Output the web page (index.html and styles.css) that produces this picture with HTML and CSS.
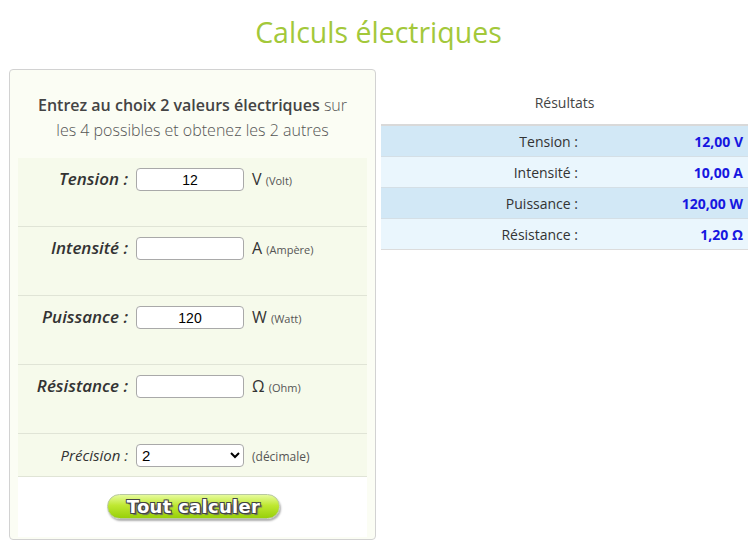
FILE: index.html
```html
<!DOCTYPE html>
<html lang="fr">

<head>
    <meta charset="UTF-8">
    <meta name="viewport" content="width=device-width, initial-scale=1.0">
    <title>Calculs électriques</title>
    <link rel="stylesheet" href="styles.css">
</head>

<body>
    <h1 class='titre'>Calculs électriques</h1>
    <div class='page'>
        <form class='saisie'>
            <p class='intro'><b>Entrez au choix 2 valeurs électriques</b> sur les 4 possibles et obtenez les 2 autres</p>
            <div class='ligne'>
                <label>Tension :</label>
                <input type='text' value='12'>
                <span class='unite'>V <small>(Volt)</small></span>
            </div>
            <div class='ligne'>
                <label>Intensité :</label>
                <input type='text' value=''>
                <span class='unite'>A <small>(Ampère)</small></span>
            </div>
            <div class='ligne'>
                <label>Puissance :</label>
                <input type='text' value='120'>
                <span class='unite'>W <small>(Watt)</small></span>
            </div>
            <div class='ligne'>
                <label>Résistance :</label>
                <input type='text' value=''>
                <span class='unite'>Ω <small>(Ohm)</small></span>
            </div>
            <div class='ligne precision'>
                <label>Précision :</label>
                <select>
                    <option>0</option>
                    <option>1</option>
                    <option selected>2</option>
                    <option>3</option>
                </select>
                <span class='unite'><small>(décimale)</small></span>
            </div>
            <div class='bas'>
                <button type='button' class='bouton'>Tout calculer</button>
            </div>
        </form>
        <div class='resultats'>
            <h2>Résultats</h2>
            <table>
                <tr><td class='nom'>Tension :</td><td class='val'>12,00 V</td></tr>
                <tr><td class='nom'>Intensité :</td><td class='val'>10,00 A</td></tr>
                <tr><td class='nom'>Puissance :</td><td class='val'>120,00 W</td></tr>
                <tr><td class='nom'>Résistance :</td><td class='val'>1,20 Ω</td></tr>
            </table>
        </div>
    </div>
</body>

</html>
```

FILE: styles.css
```css
body {
    margin: 0 8px 0 9px;
    font-family: "Open Sans", "DejaVu Sans", sans-serif;
    color: #333;
    background-color: #fff;
}

.titre {
    margin: 0;
    padding-top: 12px;
    height: 69px;
    box-sizing: border-box;
    text-align: center;
    font-size: 28.5px;
    line-height: 40px;
    font-weight: 400;
    color: #a3c83a;
}

.page {
    display: flex;
    gap: 5px;
    align-items: flex-start;
}

/* colonne de saisie */
.saisie {
    width: 367px;
    box-sizing: border-box;
    border: 1px solid #d2d2d2;
    border-radius: 4px;
    background-color: #fbfdf4;
    padding: 0 8px 2px 8px;
}

.intro {
    margin: 0;
    padding: 23px 8px 15px 8px;
    text-align: center;
    font-size: 16px;
    line-height: 25px;
    font-weight: 300;
    color: #555;
}

.intro b {
    font-weight: 600;
    color: #444;
}

.ligne {
    display: flex;
    height: 69px;
    box-sizing: border-box;
    padding-top: 10px;
    align-items: flex-start;
    background-color: #f6faeb;
    border-bottom: 1px solid #e0e4d6;
}

.ligne label {
    width: 110px;
    text-align: right;
    font-style: italic;
    font-weight: 600;
    font-size: 17px;
    line-height: 22px;
    color: #333;
}

.ligne input,
.ligne select {
    margin-left: 8px;
    width: 108px;
    height: 23px;
    box-sizing: border-box;
    border: 1px solid #a9a9a9;
    border-radius: 4px;
    background-color: #fff;
    font-family: "Liberation Sans", Arial, sans-serif;
    font-size: 14px;
    color: #000;
}

.ligne input {
    text-align: center;
    padding: 0 4px;
}

.ligne select {
    padding: 0 0 0 1px;
    font-size: 15px;
}

.unite {
    margin-left: 8px;
    font-size: 16px;
    line-height: 22px;
    color: #333;
}

.unite small {
    font-size: 11px;
    color: #555;
}

.precision {
    height: 43px;
    padding-top: 10px;
}

.precision label {
    font-weight: 400;
    font-size: 15px;
}

.precision .unite small {
    font-size: 12px;
}

.bas {
    background-color: #fff;
    height: 60px;
    padding-top: 17px;
    box-sizing: border-box;
    text-align: center;
}

.bouton {
    width: 173px;
    height: 25px;
    margin-left: 2px;
    padding: 0;
    border: 1px solid #b8c8a0;
    border-radius: 13px;
    background: linear-gradient(#e6fb9c, #bfe832 45%, #98d00a);
    box-shadow: 1px 2px 2px #b0b0b0;
    font-family: "DejaVu Sans", "Liberation Sans", sans-serif;
    font-weight: bold;
    font-size: 18px;
    line-height: 22px;
    color: #fff;
    text-shadow: -1px -1px 0 #444, 1px -1px 0 #444, -1px 1px 0 #444, 1px 1px 0 #444, 2px 2px 1px #666;
    letter-spacing: 0.3px;
}

/* colonne des résultats */
.resultats {
    width: 367px;
}

.resultats h2 {
    margin: 0;
    padding-top: 24px;
    height: 55px;
    box-sizing: border-box;
    text-align: center;
    font-size: 14px;
    font-weight: 400;
    line-height: 20px;
    color: #444;
}

.resultats table {
    width: 100%;
    border-collapse: collapse;
    border-top: 2px solid #d9d9d9;
    border-bottom: 1px solid #dcdcdc;
    font-size: 14px;
}

.resultats tr:nth-child(odd) {
    background-color: #d2e8f6;
}

.resultats tr:nth-child(even) {
    background-color: #eaf6fd;
}

.resultats td {
    height: 30px;
    padding: 0;
    border-top: 1px solid #d4dfe6;
}

.nom {
    width: 197px;
    text-align: right;
    padding-right: 16px !important;
    color: #333;
}

.val {
    text-align: right;
    padding-right: 5px !important;
    font-weight: bold;
    color: #1616e0;
}
```
